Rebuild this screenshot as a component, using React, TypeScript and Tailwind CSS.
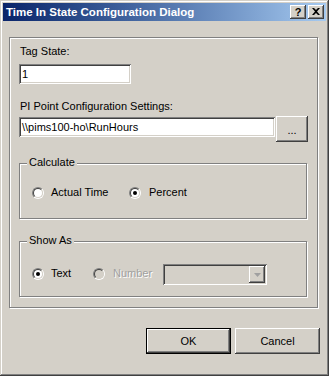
import React from "react";

const raised =
  "shadow-[inset_-1px_-1px_0_#404040,inset_1px_1px_0_#ffffff,inset_-2px_-2px_0_#808080,inset_2px_2px_0_#d4d0c8]";
const sunken =
  "shadow-[inset_1px_1px_0_#808080,inset_-1px_-1px_0_#ffffff,inset_2px_2px_0_#404040,inset_-2px_-2px_0_#d4d0c8]";

function Radio({ checked, disabled }: { checked?: boolean; disabled?: boolean }) {
  return (
    <span className="flex h-[12px] w-[12px] shrink-0 items-center justify-center rounded-full border border-t-[#808080] border-l-[#808080] border-b-white border-r-white">
      <span
        className={`flex h-[10px] w-[10px] items-center justify-center rounded-full border border-t-[#404040] border-l-[#404040] border-b-[#d4d0c8] border-r-[#d4d0c8] ${
          disabled ? "bg-[#d4d0c8]" : "bg-white"
        }`}
      >
        {checked && <span className="h-[4px] w-[4px] rounded-full bg-black" />}
      </span>
    </span>
  );
}

function GroupBox({ label, children }: { label: string; children: React.ReactNode }) {
  return (
    <div className="relative h-[56px] w-[288px] border border-[#808080] shadow-[inset_1px_1px_0_#ffffff,1px_1px_0_#ffffff]">
      {/* caption sits over the etched line */}
      <span className="absolute -top-[8px] left-[7px] bg-[#d4d0c8] px-[2px]">{label}</span>
      <div className="flex items-center pl-[12px] pt-[22px]">{children}</div>
    </div>
  );
}

export default function App() {
  return (
    <div
      className="h-[376px] w-[329px] bg-[#d4d0c8] p-[3px] font-['Liberation_Sans',Arial,sans-serif] text-[11px] leading-[13px] text-black shadow-[inset_-1px_-1px_0_#404040,inset_1px_1px_0_#d4d0c8,inset_-2px_-2px_0_#808080,inset_2px_2px_0_#ffffff]"
    >
      {/* Title bar */}
      <div className="flex h-[18px] items-center bg-gradient-to-r from-[#0a246a] to-[#a6caf0] pl-[3px] pr-[2px]">
        <span className="text-[11.5px] font-bold text-white">Time In State Configuration Dialog</span>
        <div className="ml-auto flex gap-[2px]">
          <div className={`flex h-[14px] w-[16px] items-center justify-center bg-[#d4d0c8] text-[11px] font-bold leading-none ${raised}`}>
            ?
          </div>
          <div className={`flex h-[14px] w-[16px] items-center justify-center bg-[#d4d0c8] ${raised}`}>
            <svg width="8" height="7" viewBox="0 0 8 7" className="mb-[1px]">
              <path d="M0 0h2l2 2 2-2h2L5 3.5 8 7H6L4 5 2 7H0l3-3.5z" fill="black" />
            </svg>
          </div>
        </div>
      </div>

      {/* Main etched frame */}
      <div className="ml-[6px] mt-[16px] h-[271px] w-[309px] border border-[#808080] pl-[9px] pt-[7px] shadow-[inset_1px_1px_0_#ffffff,1px_1px_0_#ffffff]">
        <div className="ml-[1px]">Tag State:</div>
        <div className={`mt-[6px] flex h-[20px] w-[112px] items-center bg-white pl-[3px] ${sunken}`}>1</div>

        <div className="ml-[1px] mt-[16px]">PI Point Configuration Settings:</div>
        <div className="mt-[3px] flex items-start">
          <div className={`mt-[1px] flex h-[20px] w-[256px] items-center bg-white pl-[3px] ${sunken}`}>
            {"\\\\pims100-ho\\RunHours"}
          </div>
          <div className={`ml-[1px] flex h-[26px] w-[32px] items-center justify-center pt-[2px] ${raised}`}>...</div>
        </div>

        <div className="mt-[21px]">
          <GroupBox label="Calculate">
            <div className="flex w-[97px] items-center">
              <Radio />
              <span className="ml-[7px]">Actual Time</span>
            </div>
            <div className="flex items-center">
              <Radio checked />
              <span className="ml-[8px]">Percent</span>
            </div>
          </GroupBox>
        </div>

        <div className="mt-[22px]">
          <GroupBox label="Show As">
            <div className="flex w-[61px] items-center">
              <Radio checked />
              <span className="ml-[7px]">Text</span>
            </div>
            <div className="flex w-[70px] items-center">
              <Radio disabled />
              <span className="ml-[8px] text-[#a0a0a0] [text-shadow:1px_1px_0_#ffffff]">Number</span>
            </div>
            <div className={`-mb-[2px] flex h-[21px] w-[104px] justify-end p-[2px] ${sunken}`}>
              <div className={`flex w-[16px] items-center justify-center bg-[#d4d0c8] ${raised}`}>
                <svg width="7" height="4" viewBox="0 0 7 4">
                  <path d="M0 0h7L3.5 4z" fill="#a0a0a0" />
                </svg>
              </div>
            </div>
          </GroupBox>
        </div>
      </div>

      {/* Buttons */}
      <div className="mr-[6px] mt-[20px] flex justify-end gap-[4px]">
        <div className="h-[26px] w-[85px] border border-black">
          <div className={`flex h-full w-full items-center justify-center ${raised}`}>OK</div>
        </div>
        <div className={`flex h-[26px] w-[85px] items-center justify-center ${raised}`}>Cancel</div>
      </div>
    </div>
  );
}
